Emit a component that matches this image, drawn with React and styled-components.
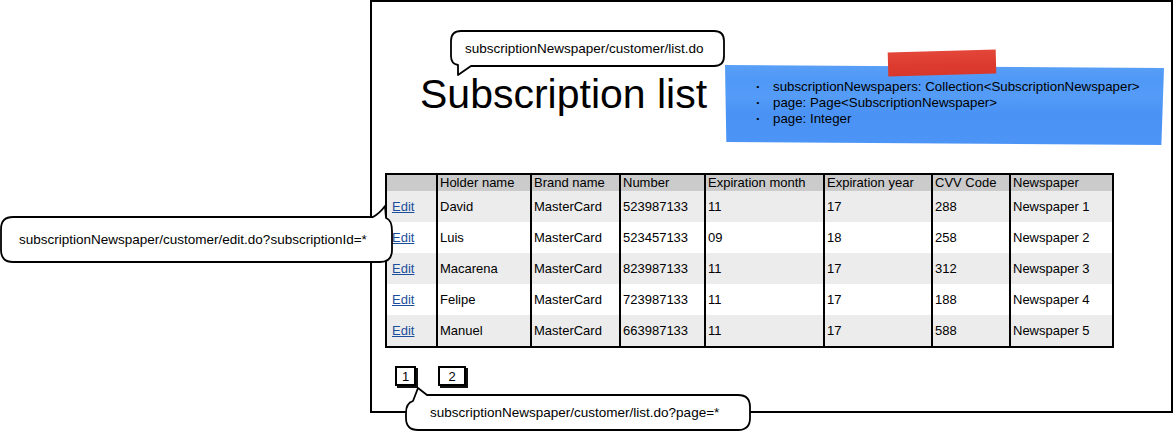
import React from "react";
import styled, { createGlobalStyle } from "styled-components";

const GlobalStyle = createGlobalStyle`
  html, body { margin: 0; padding: 0; background: #fff; }
  body { font-family: "Liberation Sans", Arial, sans-serif; color: #000; }
`;

const Canvas = styled.div`
  position: relative;
  width: 1174px;
  height: 433px;
  overflow: hidden;
  background: #fff;
`;

const Frame = styled.div`
  box-sizing: border-box;
  margin-left: 370px;
  width: 803px;
  height: 413px;
  border: 2px solid #000;
  display: flex;
  flex-direction: column;
  align-items: flex-start;
`;

const Title = styled.h1`
  margin: 72px 0 0 48px;
  font-size: 41px;
  line-height: 41px;
  font-weight: normal;
  white-space: nowrap;
`;

const Grid = styled.div`
  margin: 58px 0 0 13px;
  width: 729px;
  box-sizing: border-box;
  border: 2px solid #000;
`;

const Row = styled.div`
  display: grid;
  grid-template-columns: 49px 94px 89px 85px 119px 108px 78px 103px;
  height: ${(p) => (p.$header ? 16 : 31)}px;
  background: ${(p) => (p.$header ? "#cbcbcb" : p.$odd ? "#ececec" : "#ffffff")};
`;

const Cell = styled.div`
  box-sizing: border-box;
  border-left: 2px solid #000;
  padding-left: 2px;
  display: flex;
  align-items: center;
  font-size: 13px;
  line-height: 16px;
  white-space: nowrap;
  overflow: hidden;
  &:first-child {
    border-left: none;
    padding-left: 5px;
  }
`;

const EditLink = styled.a`
  color: #1b4f9c;
  text-decoration: underline;
  cursor: pointer;
`;

const Pager = styled.div`
  display: flex;
  gap: 22px;
  margin: 18px 0 0 23px;
`;

const PageBox = styled.div`
  box-sizing: border-box;
  width: ${(p) => p.$w}px;
  height: 20px;
  border: 2px solid #000;
  box-shadow: 2px 2px 0 #111;
  background: #fff;
  font-size: 13px;
  display: flex;
  align-items: center;
  justify-content: center;
`;

const Note = styled.div`
  position: absolute;
  left: 725px;
  top: 64px;
  width: 439px;
  height: 81px;
  box-sizing: border-box;
  padding: 15px 0 0 31px;
  background: linear-gradient(
    180deg,
    #5aa0f7 0%,
    #4f98f6 20%,
    #549cf7 40%,
    #4a93f5 60%,
    #4c95f6 100%
  );
  clip-path: polygon(0 1px, 100% 4px, 99.4% 100%, 0.3% calc(100% - 3px));
`;

const Tape = styled.div`
  position: absolute;
  left: 888px;
  top: 51px;
  width: 108px;
  height: 24px;
  background: linear-gradient(180deg, #e4463a 0%, #dc3a2e 60%, #d8382c 100%);
  transform: rotate(-1.5deg);
`;

const NoteLine = styled.div`
  display: flex;
  font-size: 13.3px;
  line-height: 16px;
  white-space: nowrap;
`;

const Dot = styled.span`
  width: 17px;
  flex: none;
  font-weight: bold;
`;

const Bubble = styled.div`
  position: absolute;
  left: ${(p) => p.$left}px;
  top: ${(p) => p.$top}px;
  width: ${(p) => p.$w}px;
  height: ${(p) => p.$h}px;
  box-sizing: border-box;
  padding-left: ${(p) => p.$pad}px;
  display: flex;
  align-items: center;
  font-size: 13.5px;
  white-space: nowrap;
`;

const BubbleShape = styled.svg`
  position: absolute;
  left: 0;
  top: 0;
  overflow: visible;
  z-index: 0;
`;

const BubbleText = styled.span`
  position: relative;
  z-index: 1;
`;

function Callout({ left, top, w, h, pad, d, children }) {
  return (
    <Bubble $left={left} $top={top} $w={w} $h={h} $pad={pad}>
      <BubbleShape width={w} height={h} viewBox={`0 0 ${w} ${h}`}>
        <path d={d} fill="#fff" stroke="#000" strokeWidth="1.8" strokeLinejoin="round" />
      </BubbleShape>
      <BubbleText>{children}</BubbleText>
    </Bubble>
  );
}

const headers = [
  "",
  "Holder name",
  "Brand name",
  "Number",
  "Expiration month",
  "Expiration year",
  "CVV Code",
  "Newspaper",
];

const rows = [
  ["David", "MasterCard", "523987133", "11", "17", "288", "Newspaper 1"],
  ["Luis", "MasterCard", "523457133", "09", "18", "258", "Newspaper 2"],
  ["Macarena", "MasterCard", "823987133", "11", "17", "312", "Newspaper 3"],
  ["Felipe", "MasterCard", "723987133", "11", "17", "188", "Newspaper 4"],
  ["Manuel", "MasterCard", "663987133", "11", "17", "588", "Newspaper 5"],
];

export default function App() {
  return (
    <>
      <GlobalStyle />
      <Canvas>
        <Frame>
          <Title>Subscription list</Title>
          <Grid>
            <Row $header>
              {headers.map((h, i) => (
                <Cell key={i}>{h}</Cell>
              ))}
            </Row>
            {rows.map((r, i) => (
              <Row key={i} $odd={i % 2 === 0}>
                <Cell>
                  <EditLink>Edit</EditLink>
                </Cell>
                {r.map((v, j) => (
                  <Cell key={j}>{v}</Cell>
                ))}
              </Row>
            ))}
          </Grid>
          <Pager>
            <PageBox $w={21}>1</PageBox>
            <PageBox $w={28}>2</PageBox>
          </Pager>
        </Frame>

        <Note>
          <NoteLine>
            <Dot>·</Dot>subscriptionNewspapers: Collection&lt;SubscriptionNewspaper&gt;
          </NoteLine>
          <NoteLine>
            <Dot>·</Dot>page: Page&lt;SubscriptionNewspaper&gt;
          </NoteLine>
          <NoteLine>
            <Dot>·</Dot>page: Integer
          </NoteLine>
        </Note>
        <Tape />

        <Callout
          left={451}
          top={31}
          w={273}
          h={35}
          pad={14}
          d="M10,0 H263 Q273,0 273,10 V25 Q273,35 263,35 H20 L7,44 L7,34 Q0,33 0,25 V10 Q0,0 10,0 Z"
        >
          subscriptionNewspaper/customer/list.do
        </Callout>

        <Callout
          left={1}
          top={217}
          w={391}
          h={45}
          pad={18}
          d="M12,0 H372 Q379,-4 384,-11 L385,1 Q391,3 391,14 V33 Q391,45 379,45 H12 Q0,45 0,33 V12 Q0,0 12,0 Z"
        >
          subscriptionNewspaper/customer/edit.do?subscriptionId=*
        </Callout>

        <Callout
          left={406}
          top={395}
          w={344}
          h={35}
          pad={24}
          d="M21,0 H332 Q344,0 344,12 V23 Q344,35 332,35 H12 Q0,35 0,23 V18 Q0,8 7,6 L12,-7 L21,0 Z"
        >
          subscriptionNewspaper/customer/list.do?page=*
        </Callout>
      </Canvas>
    </>
  );
}
